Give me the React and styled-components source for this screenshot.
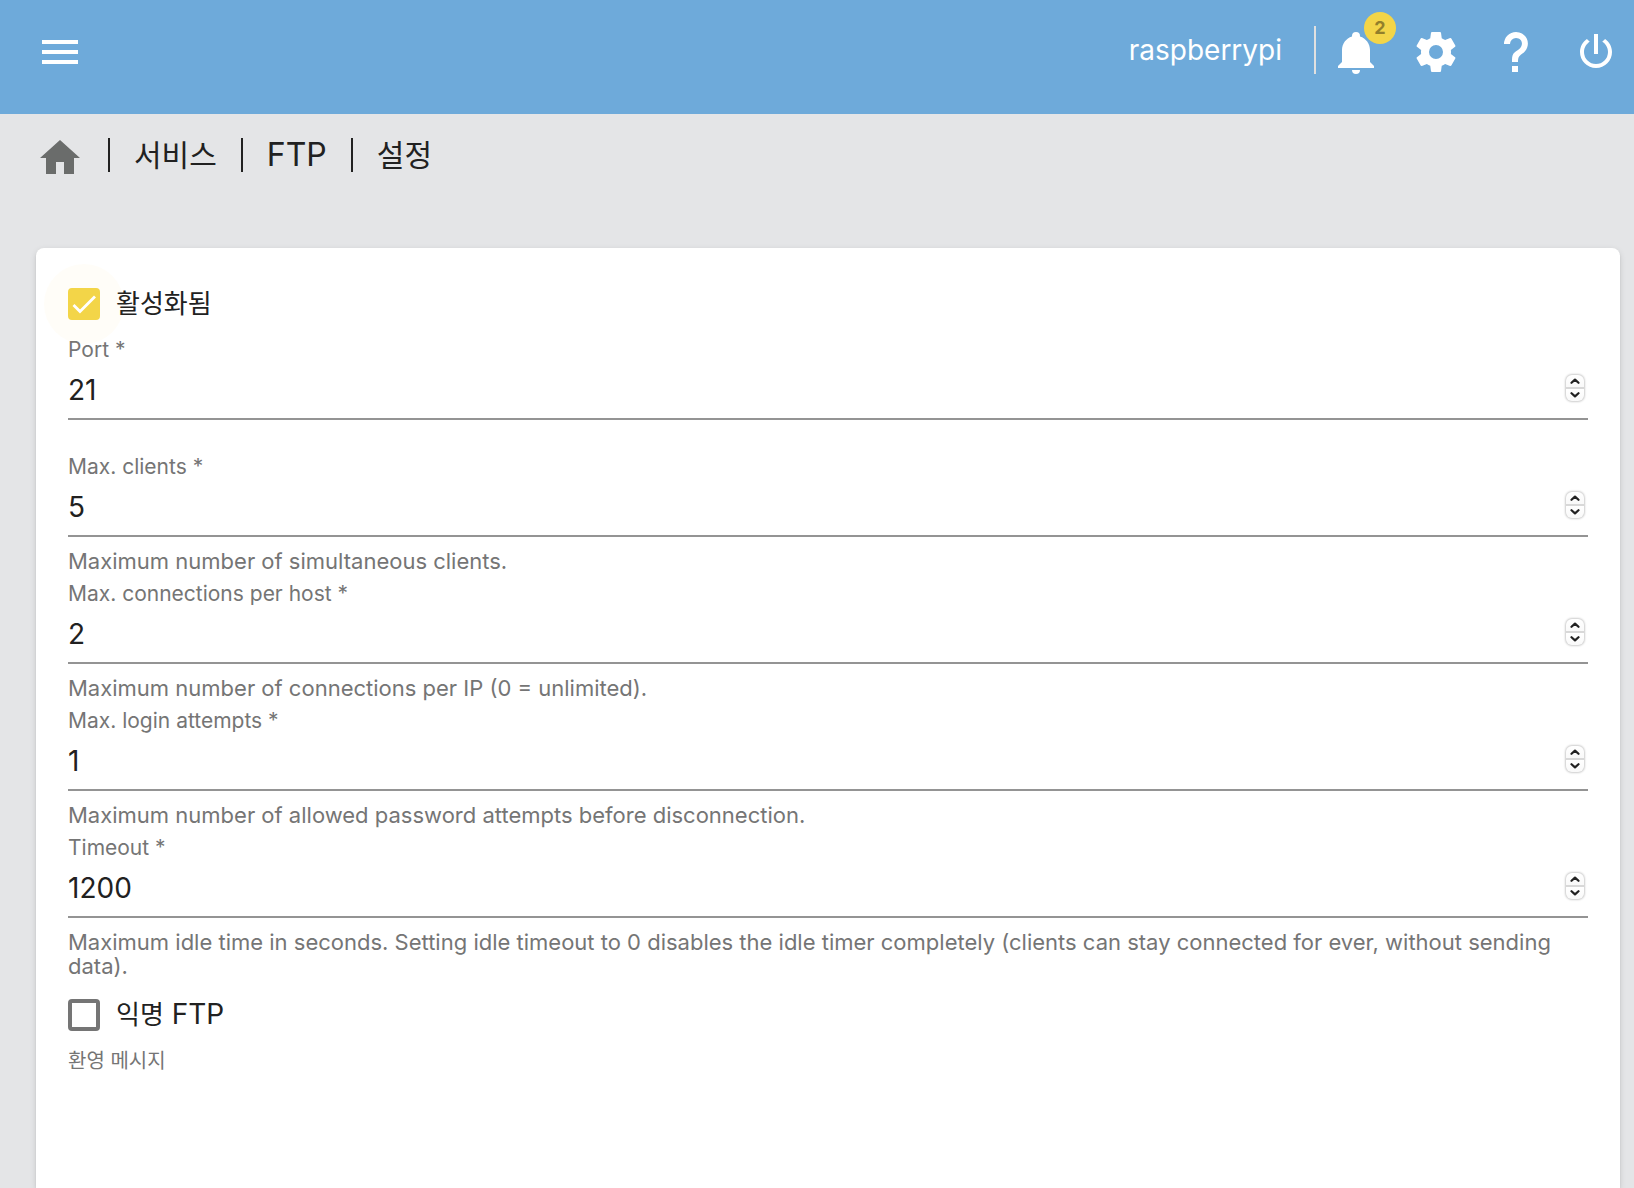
import React, { useId, useRef } from "react";
import styled, { createGlobalStyle } from "styled-components";

const color = {
  header: "#6eaada",
  page: "#e4e5e7",
  accent: "#f3d548",
  text: "#212121",
  muted: "#757575",
  line: "#949494",
};

const GlobalStyle = createGlobalStyle`
  *, *::before, *::after { box-sizing: border-box; }
  body {
    margin: 0;
    background: ${color.page};
    color: ${color.text};
    font-family: Inter, "Noto Sans CJK KR", sans-serif;
  }
  button, input, textarea { font: inherit; color: inherit; }
`;

const Page = styled.div`
  display: flex;
  flex-direction: column;
  min-height: 100vh;
`;

const TopBar = styled.header`
  display: flex;
  align-items: flex-start;
  justify-content: space-between;
  height: 114px;
  padding: 26px 14px 0 36px;
  background: ${color.header};
  color: #fff;
`;

const TopActions = styled.div`
  display: flex;
  align-items: flex-start;
`;

const HostName = styled.span`
  padding-right: 32px;
  font-size: 28px;
  line-height: 48px;
`;

const Divider = styled.span`
  width: 2px;
  height: 48px;
  margin-right: 16px;
  background: #e0e0e0;
`;

const IconRow = styled.div`
  display: flex;
  gap: 32px;
  padding-top: 2px;
`;

const IconButton = styled.button`
  position: relative;
  display: block;
  width: 48px;
  height: 48px;
  padding: 0;
  border: 0;
  background: none;
  cursor: pointer;
`;

const Badge = styled.span`
  position: absolute;
  top: -16px;
  right: -16px;
  width: 32px;
  height: 32px;
  border-radius: 50%;
  background: ${color.accent};
  color: #927f2b;
  font-size: 18px;
  font-weight: 700;
  line-height: 32px;
  text-align: center;
`;

const Svg = styled.svg`
  display: block;
  width: 48px;
  height: 48px;
  fill: currentColor;
`;

const Crumbs = styled.nav`
  display: flex;
  align-items: flex-start;
  gap: 24px;
  height: 134px;
  padding: 20px 36px 0;
`;

const HomeLink = styled.a`
  color: #6a6c6b;
`;

const Crumb = styled.a`
  display: flex;
  align-items: center;
  gap: 24px;
  height: 42px;
  color: ${color.text};
  font-size: ${(p) => (p.$korean ? 30 : 32)}px;
  line-height: 34px;
  text-decoration: none;

  &::before {
    content: "";
    width: 2px;
    height: 34px;
    background: ${color.text};
  }
`;

const Card = styled.form`
  display: flex;
  flex: 1;
  flex-direction: column;
  gap: 9px;
  margin: 0 14px 0 36px;
  padding: 28px 32px 0;
  border-radius: 8px 8px 0 0;
  background: #fff;
  box-shadow: 0 4px 2px -2px rgba(0, 0, 0, 0.12), 0 2px 2px rgba(0, 0, 0, 0.1),
    0 2px 6px rgba(0, 0, 0, 0.12);
`;

const CheckRow = styled.label`
  display: flex;
  align-items: center;
  gap: 16px;
  align-self: flex-start;
  padding: 11px 0 9px;
  font-size: 28px;
  line-height: 32px;
  cursor: pointer;
`;

const CheckBox = styled.span`
  position: relative;
  display: grid;
  width: 32px;
  height: 32px;

  &::before {
    content: "";
    position: absolute;
    inset: -24px;
    border-radius: 50%;
    background: ${color.accent};
    opacity: ${(p) => (p.$halo ? 0.04 : 0)};
  }

  input {
    position: relative;
    grid-area: 1 / 1;
    width: 32px;
    height: 32px;
    margin: 0;
    appearance: none;
    border: 4px solid ${color.muted};
    border-radius: 4px;
    background: #fff;
    cursor: pointer;
  }

  input:checked {
    border-color: ${color.accent};
    background: ${color.accent};
  }

  svg {
    position: relative;
    grid-area: 1 / 1;
    visibility: hidden;
    width: 32px;
    height: 32px;
    pointer-events: none;
  }

  input:checked + svg {
    visibility: visible;
  }
`;

const Korean = styled.span`
  font-size: 26px;
`;

const Field = styled.div`
  padding-bottom: ${(p) => (p.$hinted ? 0 : 26)}px;
`;

const FieldLabel = styled.label`
  display: block;
  color: ${color.muted};
  font-size: ${(p) => (p.$korean ? 20 : 21)}px;
  line-height: 24px;
`;

const Control = styled.div`
  display: flex;
  align-items: flex-start;
  margin-top: 9px;
  padding-bottom: 9px;
  border-bottom: 2px solid ${color.line};
`;

const NumberInput = styled.input`
  flex: 1;
  min-width: 0;
  height: 38px;
  padding: 0;
  border: 0;
  outline: 0;
  background: none;
  font-size: 28px;
  appearance: textfield;

  &::-webkit-inner-spin-button {
    appearance: none;
    margin: 0;
  }
`;

const Stepper = styled.div`
  display: grid;
  grid-template-rows: 1fr 1fr;
  gap: 2px;
  width: 18px;
  height: 26px;
  margin: 4px 4px 0 0;
  overflow: hidden;
  border-radius: 6px;
  background: #d8d8d8;
  box-shadow: 0 0 2px 1px rgba(0, 0, 0, 0.2);
`;

const StepButton = styled.button`
  display: grid;
  place-items: center;
  padding: 0;
  border: 0;
  background: linear-gradient(#fff, #f9f9f9);

  svg {
    display: block;
    width: 10px;
    height: 6px;
  }
`;

const Hint = styled.p`
  margin: 0;
  padding-top: 12px;
  color: ${color.muted};
  font-size: 22px;
  line-height: 24px;
`;

const MessageField = styled.div`
  display: flex;
  flex: 1;
  flex-direction: column;
`;

const MessageInput = styled.textarea`
  flex: 1;
  margin-top: 9px;
  padding: 0;
  border: 0;
  outline: 0;
  resize: none;
  background: none;
  font-size: 28px;
`;

const icons = {
  menu: "M3,6H21V8H3V6M3,11H21V13H3V11M3,16H21V18H3V16Z",
  home: "M10,20V14H14V20H19V12H22L12,3L2,12H5V20H10Z",
  bell: "M21,19V20H3V19L5,17V11C5,7.9 7.03,5.17 10,4.29C10,4.19 10,4.1 10,4A2,2 0 0,1 12,2A2,2 0 0,1 14,4C14,4.1 14,4.19 14,4.29C16.97,5.17 19,7.9 19,11V17L21,19M14,21A2,2 0 0,1 12,23A2,2 0 0,1 10,21",
  cog: "M12,15.5A3.5,3.5 0 0,1 8.5,12A3.5,3.5 0 0,1 12,8.5A3.5,3.5 0 0,1 15.5,12A3.5,3.5 0 0,1 12,15.5M19.43,12.97C19.47,12.65 19.5,12.33 19.5,12C19.5,11.67 19.47,11.34 19.43,11L21.54,9.37C21.73,9.22 21.78,8.95 21.66,8.73L19.66,5.27C19.54,5.05 19.27,4.96 19.05,5.05L16.56,6.05C16.04,5.66 15.5,5.32 14.87,5.07L14.5,2.42C14.46,2.18 14.25,2 14,2H10C9.75,2 9.54,2.18 9.5,2.42L9.13,5.07C8.5,5.32 7.96,5.66 7.44,6.05L4.95,5.05C4.73,4.96 4.46,5.05 4.34,5.27L2.34,8.73C2.21,8.95 2.27,9.22 2.46,9.37L4.57,11C4.53,11.34 4.5,11.67 4.5,12C4.5,12.33 4.53,12.65 4.57,12.97L2.46,14.63C2.27,14.78 2.21,15.05 2.34,15.27L4.34,18.73C4.46,18.95 4.73,19.03 4.95,18.95L7.44,17.94C7.96,18.34 8.5,18.68 9.13,18.93L9.5,21.58C9.54,21.82 9.75,22 10,22H14C14.25,22 14.46,21.82 14.5,21.58L14.87,18.93C15.5,18.67 16.04,18.34 16.56,17.94L19.05,18.95C19.27,19.03 19.54,18.95 19.66,18.73L21.66,15.27C21.78,15.05 21.73,14.78 21.54,14.63L19.43,12.97Z",
  help: "M10,19H13V22H10V19M12,2C17.35,2.22 19.68,7.62 16.5,11.67C15.67,12.67 14.33,13.33 13.67,14.17C13,15 13,16 13,17H10C10,15.33 10,13.92 10.67,12.92C11.33,11.92 12.67,11.33 13.5,10.67C15.92,8.43 15.32,5.26 12,5A3,3 0 0,0 9,8H6A6,6 0 0,1 12,2Z",
  power: "M16.56,5.44L15.11,6.89C16.84,7.94 18,9.83 18,12A6,6 0 0,1 12,18A6,6 0 0,1 6,12C6,9.83 7.16,7.94 8.88,6.88L7.44,5.44C5.36,6.88 4,9.28 4,12A8,8 0 0,0 12,20A8,8 0 0,0 20,12C20,9.28 18.64,6.88 16.56,5.44M13,3H11V13H13",
};

function Icon({ name }) {
  return (
    <Svg viewBox="0 0 24 24" aria-hidden="true">
      <path d={icons[name]} />
    </Svg>
  );
}

function Chevron({ d }) {
  return (
    <svg viewBox="0 0 10 6" aria-hidden="true">
      <path d={d} fill="none" stroke="#222" strokeWidth="2.2" strokeLinecap="round" strokeLinejoin="round" />
    </svg>
  );
}

function CheckField({ children, checked }) {
  return (
    <CheckRow>
      <CheckBox $halo={checked}>
        <input type="checkbox" defaultChecked={checked} />
        <svg viewBox="0 0 32 32" aria-hidden="true">
          <path d="M5.5 17L12 23.5L27 8.5" fill="none" stroke="#fff" strokeWidth="2.8" />
        </svg>
      </CheckBox>
      <span>{children}</span>
    </CheckRow>
  );
}

function NumberField({ label, value, hint }) {
  const id = useId();
  const input = useRef(null);
  return (
    <Field $hinted={Boolean(hint)}>
      <FieldLabel htmlFor={id}>{label} *</FieldLabel>
      <Control>
        <NumberInput ref={input} id={id} type="number" defaultValue={value} />
        <Stepper>
          <StepButton type="button" aria-label="+" onClick={() => input.current.stepUp()}>
            <Chevron d="M1.5 4.8L5 1.6L8.5 4.8" />
          </StepButton>
          <StepButton type="button" aria-label="-" onClick={() => input.current.stepDown()}>
            <Chevron d="M1.5 1.2L5 4.4L8.5 1.2" />
          </StepButton>
        </Stepper>
      </Control>
      {hint && <Hint>{hint}</Hint>}
    </Field>
  );
}

const fields = [
  { label: "Port", value: 21 },
  { label: "Max. clients", value: 5, hint: "Maximum number of simultaneous clients." },
  {
    label: "Max. connections per host",
    value: 2,
    hint: "Maximum number of connections per IP (0 = unlimited).",
  },
  {
    label: "Max. login attempts",
    value: 1,
    hint: "Maximum number of allowed password attempts before disconnection.",
  },
  {
    label: "Timeout",
    value: 1200,
    hint: "Maximum idle time in seconds. Setting idle timeout to 0 disables the idle timer completely (clients can stay connected for ever, without sending data).",
  },
];

export default function App() {
  return (
    <Page>
      <GlobalStyle />
      <TopBar>
        <IconRow>
          <IconButton type="button">
            <Icon name="menu" />
          </IconButton>
        </IconRow>
        <TopActions>
          <HostName>raspberrypi</HostName>
          <Divider />
          <IconRow>
            <IconButton type="button">
              <Icon name="bell" />
              <Badge>2</Badge>
            </IconButton>
            <IconButton type="button">
              <Icon name="cog" />
            </IconButton>
            <IconButton type="button">
              <Icon name="help" />
            </IconButton>
            <IconButton type="button">
              <Icon name="power" />
            </IconButton>
          </IconRow>
        </TopActions>
      </TopBar>
      <Crumbs>
        <HomeLink href="#/">
          <Icon name="home" />
        </HomeLink>
        <Crumb href="#/services" $korean>서비스</Crumb>
        <Crumb href="#/services/ftp">FTP</Crumb>
        <Crumb href="#/services/ftp/settings" $korean>설정</Crumb>
      </Crumbs>
      <Card>
        <CheckField checked>
          <Korean>활성화됨</Korean>
        </CheckField>
        {fields.map((f) => (
          <NumberField key={f.label} {...f} />
        ))}
        <CheckField>
          <Korean>익명</Korean> FTP
        </CheckField>
        <MessageField>
          <FieldLabel htmlFor="welcome" $korean>환영 메시지</FieldLabel>
          <MessageInput id="welcome" />
        </MessageField>
      </Card>
    </Page>
  );
}
